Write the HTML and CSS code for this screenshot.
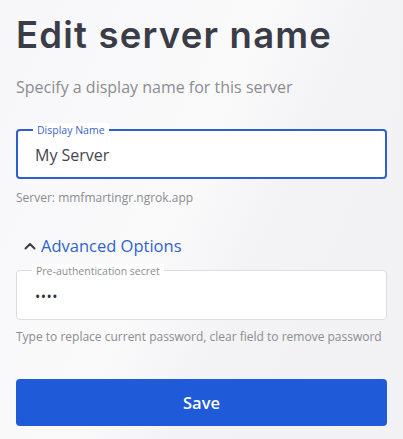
FILE: index.html
```html
<!DOCTYPE html>
<html>
<head>
<meta charset="utf-8">
<link rel="stylesheet" href="styles.css">
</head>
<body>
<main class="page">
  <h1 class="title">Edit server name</h1>
  <p class="subtitle">Specify a display name for this server</p>

  <div class="field field-active">
    <span class="field-label">Display Name</span>
    <div class="field-value">My Server</div>
  </div>
  <p class="hint hint-server">Server: mmfmartingr.ngrok.app</p>

  <div class="advanced">
    <svg class="chevron" width="12" height="8" viewBox="0 0 12 8"><path d="M1.5 6.5 L6 2 L10.5 6.5" fill="none" stroke="#3a3d48" stroke-width="2" stroke-linecap="round" stroke-linejoin="round"/></svg>
    <span>Advanced Options</span>
  </div>

  <div class="field">
    <span class="field-label field-label-muted">Pre-authentication secret</span>
    <div class="field-value field-dots">••••</div>
  </div>
  <p class="hint hint-password">Type to replace current password, clear field to remove password</p>

  <button class="save">Save</button>
</main>
</body>
</html>
```

FILE: styles.css
```css
html, body {
  margin: 0;
  padding: 0;
}
body {
  width: 403px;
  height: 439px;
  overflow: hidden;
  background: linear-gradient(115deg, #f7f7f9 0%, #fafafb 45%, #f3f3f5 62%, #f2f2f4 100%);
  font-family: "Open Sans", sans-serif;
}
.page {
  padding: 10px 16px 0 16px;
  display: flex;
  flex-direction: column;
}
.title {
  margin: 0;
  font-family: "Inter", sans-serif;
  font-weight: 600;
  font-size: 36.5px;
  line-height: 50px;
  color: #3a3c47;
  letter-spacing: 1.2px;
}
.subtitle {
  margin: 16px 0 0 0;
  font-size: 16px;
  line-height: 22px;
  color: #8b8c92;
}
.field {
  position: relative;
  margin-top: 31px;
  height: 50px;
  box-sizing: border-box;
  border: 1px solid #dcdce0;
  border-radius: 4px;
  background: #fff;
  display: flex;
  align-items: center;
  padding: 0 18px;
}
.field-active {
  border: 2px solid #2e5fce;
  padding: 0 17px;
}
.field-label {
  position: absolute;
  top: -8px;
  left: 15px;
  padding: 0 4px;
  background: #fff;
  font-size: 10.5px;
  line-height: 14px;
  color: #3b63c9;
}
.field-label-muted {
  color: #8c8d93;
  top: -7px;
}
.field-value {
  font-size: 16px;
  color: #45464d;
  padding-top: 2px;
}
.field-dots {
  font-size: 14px;
  letter-spacing: 0.5px;
  color: #2f3038;
}
.hint {
  margin: 7px 0 0 0;
  font-size: 12px;
  line-height: 18px;
  color: #8b8c92;
  white-space: nowrap;
}
.hint-server {
  margin-top: 10px;
}
.advanced {
  margin-top: 27px;
  display: flex;
  align-items: center;
  gap: 5px;
  padding-left: 8px;
  font-size: 16.5px;
  line-height: 24px;
  color: #2f62d0;
}
.chevron {
  display: block;
}
.advanced + .field {
  margin-top: 12px;
}
.hint-password {
  margin-top: 8px;
}
.save {
  margin-top: 33px;
  height: 47px;
  border: none;
  border-radius: 4px;
  background: #1f5ad8;
  color: #fff;
  font-family: "Open Sans", sans-serif;
  font-weight: 600;
  font-size: 16.5px;
}
```
